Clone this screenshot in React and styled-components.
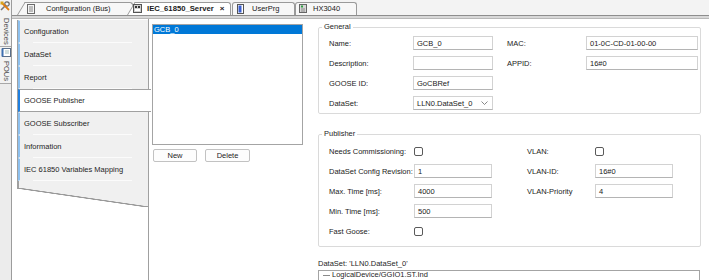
import React from "react";
import styled, { createGlobalStyle } from "styled-components";

const FONT = `"Liberation Sans", Arial, sans-serif`;

const GlobalStyle = createGlobalStyle`
  html, body { margin: 0; padding: 0; background: #fff; }
  body { font-family: ${FONT}; font-size: 7.5px; color: #1e1e1e; }
  * { box-sizing: border-box; }
`;

const Frame = styled.div`
  width: 709px;
  height: 280px;
  overflow: hidden;
  display: grid;
  grid-template-columns: 12px 1fr;
  background: #fff;
`;

/* ---------- left vertical strip ---------- */
const SideStrip = styled.div`
  background: #ececec;
  border-right: 1px solid #9c9c9c;
  display: flex;
  flex-direction: column;
`;

const SideTab = styled.div`
  height: ${(p) => p.$h}px;
  display: flex;
  flex-direction: column;
  align-items: center;
  gap: ${(p) => p.$gap}px;
  padding-top: 1px;
  border-bottom: 1px solid #a8a8a8;
  background: #f2f2f2;
`;

const SideLabel = styled.span`
  writing-mode: vertical-rl;
  font-size: 7.5px;
  line-height: 10px;
  color: #4a4a4a;
`;

/* ---------- top document tabs ---------- */
const Main = styled.div`
  display: flex;
  flex-direction: column;
  min-width: 0;
`;

const TabBar = styled.div`
  height: 15px;
  display: flex;
  align-items: flex-end;
  padding-left: 5px;
  background: #f3f3f3;
`;

const Tab = styled.div`
  position: relative;
  z-index: ${(p) => (p.$active ? 3 : p.$z || 1)};
  width: ${(p) => p.$w}px;
  height: 13px;
  margin-left: ${(p) => p.$ml || 0}px;
  display: flex;
  align-items: center;
  gap: ${(p) => p.$gap || 10}px;
  padding-left: ${(p) => p.$pl || 10}px;
  font-weight: ${(p) => (p.$active ? 700 : 400)};
  font-size: ${(p) => (p.$active ? "7.7px" : "7.5px")};
  color: #1a1a1a;
  white-space: nowrap;

  &::before {
    content: "";
    display: ${(p) => (p.$slant ? "block" : "none")};
    position: absolute;
    z-index: -1;
    left: 0;
    top: 0;
    bottom: 0;
    width: 16px;
    background: ${(p) => (p.$active ? "#ffffff" : "#f7f7f7")};
    border-left: 1px solid #9a9a9a;
    border-top: 1px solid #9a9a9a;
    transform: skewX(-31deg);
    transform-origin: bottom left;
  }
  &::after {
    content: "";
    position: absolute;
    z-index: -1;
    left: ${(p) => (p.$slant ? 8 : 0)}px;
    right: 0;
    top: 0;
    bottom: 0;
    background: ${(p) => (p.$active ? "#ffffff" : "#f7f7f7")};
    border-top: 1px solid #9a9a9a;
    border-right: 1px solid #9a9a9a;
    border-left: ${(p) => (p.$slant ? "none" : "1px solid #9a9a9a")};
    border-radius: ${(p) => (p.$slant ? "0 3px 0 0" : "3px 3px 0 0")};
  }
`;

const TabClose = styled.span`
  margin-left: 1px;
  font-size: 8px;
  font-weight: 700;
`;

const TabRule = styled.div`
  height: 4px;
  border-top: 1px solid #8e8e8e;
  background: #d8d8d8;
  border-bottom: 1px solid #b8b8b8;
`;

/* ---------- body ---------- */
const Body = styled.div`
  flex: 1;
  display: flex;
  min-height: 0;
`;

const NavColumn = styled.div`
  flex: 0 0 137px;
  padding-left: 5px;
  padding-top: 1px;
  border-right: 1px solid #a0a0a0;
  display: flex;
  flex-direction: column;
`;

const NavPanel = styled.div`
  background: #f0f0f0;
  border-left: 1px solid #a0a0a0;
  display: flex;
  flex-direction: column;
`;

const NavItem = styled.div`
  position: relative;
  height: 23px;
  display: flex;
  align-items: center;
  padding-left: 4px;
  border-left: 2px solid ${(p) => (p.$active ? "#1f7fe0" : "#8dc0ee")};
  background: ${(p) => (p.$active ? "#ffffff" : "transparent")};
  border-top: 1px solid ${(p) => (p.$active ? "#a0a0a0" : "transparent")};
  border-bottom: 1px solid ${(p) => (p.$active ? "#a0a0a0" : "transparent")};
  margin-right: ${(p) => (p.$active ? "-3px" : "0")};
  z-index: ${(p) => (p.$active ? 2 : 1)};
  color: #1e1e1e;

  &::after {
    content: "";
    display: ${(p) => (p.$active ? "none" : "block")};
    position: absolute;
    left: 13px;
    right: 16px;
    bottom: -1px;
    height: 1px;
    background: #fbfbfb;
  }
`;

const NavTail = styled.div`
  height: 7px;
  background: #f0f0f0;
  border-left: 1px solid #a0a0a0;
`;

const NavSlant = styled.div`
  height: 19px;
  background: linear-gradient(
    to top right,
    #ffffff calc(50% - 0.9px),
    #9a9a9a calc(50% - 0.4px),
    #9a9a9a calc(50% + 0.4px),
    #f0f0f0 calc(50% + 0.9px)
  );
`;

const ListColumn = styled.div`
  flex: 0 0 169px;
  padding: 5px 0 0 3px;
  display: flex;
  flex-direction: column;
`;

const ListBox = styled.div`
  width: 151px;
  height: 121px;
  border: 1px solid #a4a4a4;
  background: #fff;
`;

const ListRow = styled.div`
  height: 9px;
  line-height: 9px;
  padding-left: 1px;
  background: ${(p) => (p.$selected ? "#0078d7" : "transparent")};
  color: ${(p) => (p.$selected ? "#ffffff" : "#1e1e1e")};
`;

const ButtonRow = styled.div`
  display: flex;
  gap: 8px;
  margin-top: 4px;
  padding-left: 1px;
`;

const Button = styled.div`
  width: ${(p) => p.$w}px;
  height: 13px;
  display: flex;
  align-items: center;
  justify-content: center;
  border: 1px solid #c2c2c2;
  border-radius: 2px;
  background: #fdfdfd;
  color: #1e1e1e;
`;

const FormColumn = styled.div`
  flex: 1;
  padding-top: 4px;
  padding-right: 8px;
  display: flex;
  flex-direction: column;
  min-width: 0;
`;

const Group = styled.fieldset`
  margin: ${(p) => p.$mt || 0}px 0 0 0;
  border: 1px solid #dadada;
  border-radius: 2px;
  padding: ${(p) => p.$pt}px 2px ${(p) => p.$pb}px 10px;
  min-width: 0;
`;

const Legend = styled.legend`
  padding: 0 2px;
  margin-left: -7px;
  line-height: 8px;
  font-size: 7.5px;
  color: #1e1e1e;
`;

const FormGrid = styled.div`
  display: grid;
  grid-template-columns: ${(p) => p.$cols};
  grid-auto-rows: 14px;
  row-gap: 6px;
  align-items: center;
`;

const Label = styled.span`
  color: #222;
  white-space: nowrap;
`;

const Field = styled.div`
  width: ${(p) => p.$w}px;
  height: 14px;
  display: flex;
  align-items: center;
  justify-content: space-between;
  padding: 0 4px 0 3px;
  border: 1px solid #d2d2d2;
  border-bottom-color: #b4b4b4;
  background: #fff;
  color: #1a1a1a;
`;

const Check = styled.div`
  width: 9px;
  height: 9px;
  border: 1px solid #5a5a5a;
  border-radius: 2px;
  background: #fff;
`;

const DataSetCaption = styled.div`
  margin-top: 12px;
  line-height: 9px;
  color: #1e1e1e;
`;

const TreeBox = styled.div`
  margin-top: 2px;
  margin-right: 1px;
  height: 20px;
  border: 1px solid #a4a4a4;
  padding: 0 0 0 4px;
  display: flex;
  align-items: flex-start;
  gap: 2px;
`;

const TreeLine = styled.span`
  width: 7px;
  height: 1px;
  margin-top: 4px;
  background: #8a8a8a;
`;

const TreeText = styled.span`
  line-height: 8px;
`;

/* ---------- icons ---------- */
const DevicesIcon = () => (
  <svg width="11" height="11" viewBox="0 0 11 11">
    <path d="M1 9 L6 4" stroke="#777" strokeWidth="1.6" />
    <circle cx="7" cy="3" r="2.2" fill="none" stroke="#666" strokeWidth="1.2" />
    <path d="M2 2 L9 9" stroke="#e07a10" strokeWidth="1.8" />
    <rect x="0.5" y="0.5" width="3" height="3" fill="#d9a31a" />
  </svg>
);

const PousIcon = () => (
  <svg width="10" height="9" viewBox="0 0 10 9">
    <rect x="1.5" y="0.5" width="8" height="8" fill="#fff" stroke="#5a6e88" />
    <rect x="0.5" y="0.5" width="2" height="8" fill="#3d6fb0" />
    <path d="M4 3 H8 M4 5 H8" stroke="#8aa" strokeWidth="0.8" />
  </svg>
);

const DocIcon = () => (
  <svg width="8" height="10" viewBox="0 0 8 10">
    <rect x="0.5" y="0.5" width="7" height="9" fill="#f4f4f4" stroke="#6a6a6a" />
    <path d="M2 3 H6 M2 5 H6 M2 7 H6" stroke="#6a6a6a" strokeWidth="0.8" />
  </svg>
);

const ServerIcon = () => (
  <svg width="9" height="9" viewBox="0 0 9 9">
    <rect x="0.5" y="0.5" width="8" height="8" fill="#cfcfcf" stroke="#555" />
    <rect x="2" y="2" width="2" height="2" fill="#333" />
    <rect x="5" y="2" width="2" height="2" fill="#333" />
    <rect x="2" y="5" width="5" height="2" fill="#fff" />
  </svg>
);

const UserPrgIcon = () => (
  <svg width="7" height="10" viewBox="0 0 7 10">
    <rect x="0.5" y="0.5" width="6" height="9" fill="#fff" stroke="#555" />
    <rect x="1.5" y="1.5" width="3" height="7" fill="#3b5fd0" />
  </svg>
);

const HxIcon = () => (
  <svg width="8" height="9" viewBox="0 0 8 9">
    <rect x="0.5" y="0.5" width="7" height="8" fill="#d6d6d6" stroke="#666" />
    <rect x="2" y="1.5" width="2" height="2" fill="#2ea043" />
    <path d="M2 5 H6 M2 7 H6" stroke="#777" strokeWidth="0.8" />
  </svg>
);

const Chevron = () => (
  <svg width="7" height="4" viewBox="0 0 7 4">
    <path d="M0.5 0.5 L3.5 3.5 L6.5 0.5" fill="none" stroke="#6a6a6a" strokeWidth="0.8" />
  </svg>
);

const navItems = [
  "Configuration",
  "DataSet",
  "Report",
  "GOOSE Publisher",
  "GOOSE Subscriber",
  "Information",
  "IEC 61850 Variables Mapping",
];

export default function App() {
  return (
    <>
      <GlobalStyle />
      <Frame>
        <SideStrip>
          <SideTab $h={47} $gap={6}>
            <DevicesIcon />
            <SideLabel>Devices</SideLabel>
          </SideTab>
          <SideTab $h={37} $gap={4}>
            <PousIcon />
            <SideLabel>POUs</SideLabel>
          </SideTab>
        </SideStrip>

        <Main>
          <TabBar>
            <Tab $w={116} $slant $pl={10} $gap={11} $z={2}>
              <DocIcon />
              <span>Configuration (Bus)</span>
            </Tab>
            <Tab $w={104} $ml={-6} $slant $active $pl={6} $gap={5}>
              <ServerIcon />
              <span>IEC_61850_Server</span>
              <TabClose>×</TabClose>
            </Tab>
            <Tab $w={63} $ml={1} $pl={5} $gap={8} $z={1}>
              <UserPrgIcon />
              <span>UserPrg</span>
            </Tab>
            <Tab $w={62} $ml={0} $pl={4} $gap={6}>
              <HxIcon />
              <span>HX3040</span>
            </Tab>
          </TabBar>
          <TabRule />

          <Body>
            <NavColumn>
              <NavPanel>
                {navItems.map((t) => (
                  <NavItem key={t} $active={t === "GOOSE Publisher"}>
                    {t}
                  </NavItem>
                ))}
                <NavTail />
              </NavPanel>
              <NavSlant />
            </NavColumn>

            <ListColumn>
              <ListBox>
                <ListRow $selected>GCB_0</ListRow>
              </ListBox>
              <ButtonRow>
                <Button $w={44}>New</Button>
                <Button $w={45}>Delete</Button>
              </ButtonRow>
            </ListColumn>

            <FormColumn>
              <Group $pt={5} $pb={3}>
                <Legend>General</Legend>
                <FormGrid $cols="84px 94px 79px 112px">
                  <Label>Name:</Label>
                  <Field $w={80}>GCB_0</Field>
                  <Label>MAC:</Label>
                  <Field $w={112}>01-0C-CD-01-00-00</Field>

                  <Label>Description:</Label>
                  <Field $w={80} />
                  <Label>APPID:</Label>
                  <Field $w={112}>16#0</Field>

                  <Label>GOOSE ID:</Label>
                  <Field $w={80}>GoCBRef</Field>
                  <span />
                  <span />

                  <Label>DataSet:</Label>
                  <Field $w={80}>
                    <span>LLN0.DataSet_0</span>
                    <Chevron />
                  </Field>
                  <span />
                  <span />
                </FormGrid>
              </Group>

              <Group $mt={16} $pt={6} $pb={8}>
                <Legend>Publisher</Legend>
                <FormGrid $cols="85px 113px 68px 78px">
                  <Label>Needs Commissioning:</Label>
                  <Check />
                  <Label>VLAN:</Label>
                  <Check />

                  <Label>DataSet Config Revision:</Label>
                  <Field $w={78}>1</Field>
                  <Label>VLAN-ID:</Label>
                  <Field $w={78}>16#0</Field>

                  <Label>Max. Time [ms]:</Label>
                  <Field $w={78}>4000</Field>
                  <Label>VLAN-Priority</Label>
                  <Field $w={78}>4</Field>

                  <Label>Min. Time [ms]:</Label>
                  <Field $w={78}>500</Field>
                  <span />
                  <span />

                  <Label>Fast Goose:</Label>
                  <Check />
                  <span />
                  <span />
                </FormGrid>
              </Group>

              <DataSetCaption>DataSet: 'LLN0.DataSet_0'</DataSetCaption>
              <TreeBox>
                <TreeLine />
                <TreeText>LogicalDevice/GGIO1.ST.Ind</TreeText>
              </TreeBox>
            </FormColumn>
          </Body>
        </Main>
      </Frame>
    </>
  );
}
